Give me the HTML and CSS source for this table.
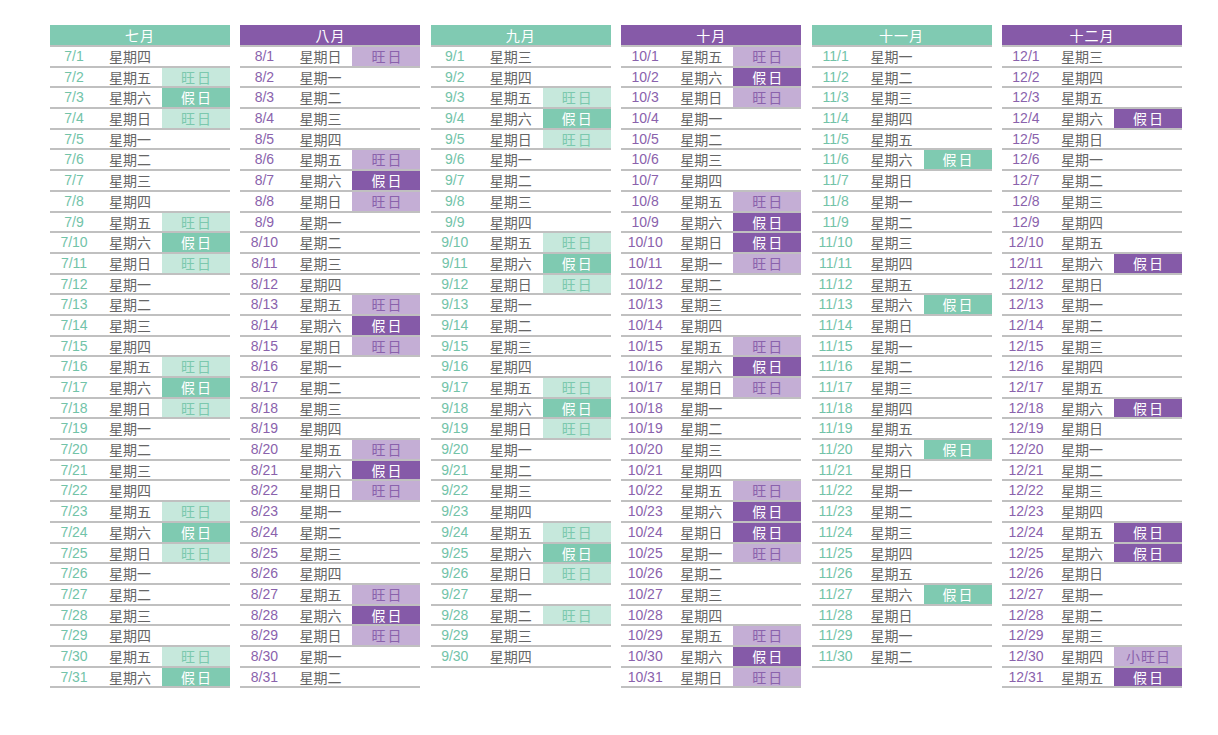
FILE: index.html
```html
<!DOCTYPE html>
<html lang="zh-Hant">
<head>
<meta charset="utf-8">
<title>2021 下半年行事曆</title>
<link rel="stylesheet" href="styles.css">
</head>
<body>
<div class="page">

<section class="month green">
<div class="hd">七月</div>
<div class="r"><span class="d">7/1</span><span class="w">星期四</span><span class="t"></span></div>
<div class="r"><span class="d">7/2</span><span class="w">星期五</span><span class="t lt">旺日</span></div>
<div class="r"><span class="d">7/3</span><span class="w">星期六</span><span class="t dk">假日</span></div>
<div class="r"><span class="d">7/4</span><span class="w">星期日</span><span class="t lt">旺日</span></div>
<div class="r"><span class="d">7/5</span><span class="w">星期一</span><span class="t"></span></div>
<div class="r"><span class="d">7/6</span><span class="w">星期二</span><span class="t"></span></div>
<div class="r"><span class="d">7/7</span><span class="w">星期三</span><span class="t"></span></div>
<div class="r"><span class="d">7/8</span><span class="w">星期四</span><span class="t"></span></div>
<div class="r"><span class="d">7/9</span><span class="w">星期五</span><span class="t lt">旺日</span></div>
<div class="r"><span class="d">7/10</span><span class="w">星期六</span><span class="t dk">假日</span></div>
<div class="r"><span class="d">7/11</span><span class="w">星期日</span><span class="t lt">旺日</span></div>
<div class="r"><span class="d">7/12</span><span class="w">星期一</span><span class="t"></span></div>
<div class="r"><span class="d">7/13</span><span class="w">星期二</span><span class="t"></span></div>
<div class="r"><span class="d">7/14</span><span class="w">星期三</span><span class="t"></span></div>
<div class="r"><span class="d">7/15</span><span class="w">星期四</span><span class="t"></span></div>
<div class="r"><span class="d">7/16</span><span class="w">星期五</span><span class="t lt">旺日</span></div>
<div class="r"><span class="d">7/17</span><span class="w">星期六</span><span class="t dk">假日</span></div>
<div class="r"><span class="d">7/18</span><span class="w">星期日</span><span class="t lt">旺日</span></div>
<div class="r"><span class="d">7/19</span><span class="w">星期一</span><span class="t"></span></div>
<div class="r"><span class="d">7/20</span><span class="w">星期二</span><span class="t"></span></div>
<div class="r"><span class="d">7/21</span><span class="w">星期三</span><span class="t"></span></div>
<div class="r"><span class="d">7/22</span><span class="w">星期四</span><span class="t"></span></div>
<div class="r"><span class="d">7/23</span><span class="w">星期五</span><span class="t lt">旺日</span></div>
<div class="r"><span class="d">7/24</span><span class="w">星期六</span><span class="t dk">假日</span></div>
<div class="r"><span class="d">7/25</span><span class="w">星期日</span><span class="t lt">旺日</span></div>
<div class="r"><span class="d">7/26</span><span class="w">星期一</span><span class="t"></span></div>
<div class="r"><span class="d">7/27</span><span class="w">星期二</span><span class="t"></span></div>
<div class="r"><span class="d">7/28</span><span class="w">星期三</span><span class="t"></span></div>
<div class="r"><span class="d">7/29</span><span class="w">星期四</span><span class="t"></span></div>
<div class="r"><span class="d">7/30</span><span class="w">星期五</span><span class="t lt">旺日</span></div>
<div class="r"><span class="d">7/31</span><span class="w">星期六</span><span class="t dk">假日</span></div>
</section>

<section class="month purple">
<div class="hd">八月</div>
<div class="r"><span class="d">8/1</span><span class="w">星期日</span><span class="t lt">旺日</span></div>
<div class="r"><span class="d">8/2</span><span class="w">星期一</span><span class="t"></span></div>
<div class="r"><span class="d">8/3</span><span class="w">星期二</span><span class="t"></span></div>
<div class="r"><span class="d">8/4</span><span class="w">星期三</span><span class="t"></span></div>
<div class="r"><span class="d">8/5</span><span class="w">星期四</span><span class="t"></span></div>
<div class="r"><span class="d">8/6</span><span class="w">星期五</span><span class="t lt">旺日</span></div>
<div class="r"><span class="d">8/7</span><span class="w">星期六</span><span class="t dk">假日</span></div>
<div class="r"><span class="d">8/8</span><span class="w">星期日</span><span class="t lt">旺日</span></div>
<div class="r"><span class="d">8/9</span><span class="w">星期一</span><span class="t"></span></div>
<div class="r"><span class="d">8/10</span><span class="w">星期二</span><span class="t"></span></div>
<div class="r"><span class="d">8/11</span><span class="w">星期三</span><span class="t"></span></div>
<div class="r"><span class="d">8/12</span><span class="w">星期四</span><span class="t"></span></div>
<div class="r"><span class="d">8/13</span><span class="w">星期五</span><span class="t lt">旺日</span></div>
<div class="r"><span class="d">8/14</span><span class="w">星期六</span><span class="t dk">假日</span></div>
<div class="r"><span class="d">8/15</span><span class="w">星期日</span><span class="t lt">旺日</span></div>
<div class="r"><span class="d">8/16</span><span class="w">星期一</span><span class="t"></span></div>
<div class="r"><span class="d">8/17</span><span class="w">星期二</span><span class="t"></span></div>
<div class="r"><span class="d">8/18</span><span class="w">星期三</span><span class="t"></span></div>
<div class="r"><span class="d">8/19</span><span class="w">星期四</span><span class="t"></span></div>
<div class="r"><span class="d">8/20</span><span class="w">星期五</span><span class="t lt">旺日</span></div>
<div class="r"><span class="d">8/21</span><span class="w">星期六</span><span class="t dk">假日</span></div>
<div class="r"><span class="d">8/22</span><span class="w">星期日</span><span class="t lt">旺日</span></div>
<div class="r"><span class="d">8/23</span><span class="w">星期一</span><span class="t"></span></div>
<div class="r"><span class="d">8/24</span><span class="w">星期二</span><span class="t"></span></div>
<div class="r"><span class="d">8/25</span><span class="w">星期三</span><span class="t"></span></div>
<div class="r"><span class="d">8/26</span><span class="w">星期四</span><span class="t"></span></div>
<div class="r"><span class="d">8/27</span><span class="w">星期五</span><span class="t lt">旺日</span></div>
<div class="r"><span class="d">8/28</span><span class="w">星期六</span><span class="t dk">假日</span></div>
<div class="r"><span class="d">8/29</span><span class="w">星期日</span><span class="t lt">旺日</span></div>
<div class="r"><span class="d">8/30</span><span class="w">星期一</span><span class="t"></span></div>
<div class="r"><span class="d">8/31</span><span class="w">星期二</span><span class="t"></span></div>
</section>

<section class="month green">
<div class="hd">九月</div>
<div class="r"><span class="d">9/1</span><span class="w">星期三</span><span class="t"></span></div>
<div class="r"><span class="d">9/2</span><span class="w">星期四</span><span class="t"></span></div>
<div class="r"><span class="d">9/3</span><span class="w">星期五</span><span class="t lt">旺日</span></div>
<div class="r"><span class="d">9/4</span><span class="w">星期六</span><span class="t dk">假日</span></div>
<div class="r"><span class="d">9/5</span><span class="w">星期日</span><span class="t lt">旺日</span></div>
<div class="r"><span class="d">9/6</span><span class="w">星期一</span><span class="t"></span></div>
<div class="r"><span class="d">9/7</span><span class="w">星期二</span><span class="t"></span></div>
<div class="r"><span class="d">9/8</span><span class="w">星期三</span><span class="t"></span></div>
<div class="r"><span class="d">9/9</span><span class="w">星期四</span><span class="t"></span></div>
<div class="r"><span class="d">9/10</span><span class="w">星期五</span><span class="t lt">旺日</span></div>
<div class="r"><span class="d">9/11</span><span class="w">星期六</span><span class="t dk">假日</span></div>
<div class="r"><span class="d">9/12</span><span class="w">星期日</span><span class="t lt">旺日</span></div>
<div class="r"><span class="d">9/13</span><span class="w">星期一</span><span class="t"></span></div>
<div class="r"><span class="d">9/14</span><span class="w">星期二</span><span class="t"></span></div>
<div class="r"><span class="d">9/15</span><span class="w">星期三</span><span class="t"></span></div>
<div class="r"><span class="d">9/16</span><span class="w">星期四</span><span class="t"></span></div>
<div class="r"><span class="d">9/17</span><span class="w">星期五</span><span class="t lt">旺日</span></div>
<div class="r"><span class="d">9/18</span><span class="w">星期六</span><span class="t dk">假日</span></div>
<div class="r"><span class="d">9/19</span><span class="w">星期日</span><span class="t lt">旺日</span></div>
<div class="r"><span class="d">9/20</span><span class="w">星期一</span><span class="t"></span></div>
<div class="r"><span class="d">9/21</span><span class="w">星期二</span><span class="t"></span></div>
<div class="r"><span class="d">9/22</span><span class="w">星期三</span><span class="t"></span></div>
<div class="r"><span class="d">9/23</span><span class="w">星期四</span><span class="t"></span></div>
<div class="r"><span class="d">9/24</span><span class="w">星期五</span><span class="t lt">旺日</span></div>
<div class="r"><span class="d">9/25</span><span class="w">星期六</span><span class="t dk">假日</span></div>
<div class="r"><span class="d">9/26</span><span class="w">星期日</span><span class="t lt">旺日</span></div>
<div class="r"><span class="d">9/27</span><span class="w">星期一</span><span class="t"></span></div>
<div class="r"><span class="d">9/28</span><span class="w">星期二</span><span class="t lt">旺日</span></div>
<div class="r"><span class="d">9/29</span><span class="w">星期三</span><span class="t"></span></div>
<div class="r"><span class="d">9/30</span><span class="w">星期四</span><span class="t"></span></div>
</section>

<section class="month purple">
<div class="hd">十月</div>
<div class="r"><span class="d">10/1</span><span class="w">星期五</span><span class="t lt">旺日</span></div>
<div class="r"><span class="d">10/2</span><span class="w">星期六</span><span class="t dk">假日</span></div>
<div class="r"><span class="d">10/3</span><span class="w">星期日</span><span class="t lt">旺日</span></div>
<div class="r"><span class="d">10/4</span><span class="w">星期一</span><span class="t"></span></div>
<div class="r"><span class="d">10/5</span><span class="w">星期二</span><span class="t"></span></div>
<div class="r"><span class="d">10/6</span><span class="w">星期三</span><span class="t"></span></div>
<div class="r"><span class="d">10/7</span><span class="w">星期四</span><span class="t"></span></div>
<div class="r"><span class="d">10/8</span><span class="w">星期五</span><span class="t lt">旺日</span></div>
<div class="r"><span class="d">10/9</span><span class="w">星期六</span><span class="t dk">假日</span></div>
<div class="r"><span class="d">10/10</span><span class="w">星期日</span><span class="t dk">假日</span></div>
<div class="r"><span class="d">10/11</span><span class="w">星期一</span><span class="t lt">旺日</span></div>
<div class="r"><span class="d">10/12</span><span class="w">星期二</span><span class="t"></span></div>
<div class="r"><span class="d">10/13</span><span class="w">星期三</span><span class="t"></span></div>
<div class="r"><span class="d">10/14</span><span class="w">星期四</span><span class="t"></span></div>
<div class="r"><span class="d">10/15</span><span class="w">星期五</span><span class="t lt">旺日</span></div>
<div class="r"><span class="d">10/16</span><span class="w">星期六</span><span class="t dk">假日</span></div>
<div class="r"><span class="d">10/17</span><span class="w">星期日</span><span class="t lt">旺日</span></div>
<div class="r"><span class="d">10/18</span><span class="w">星期一</span><span class="t"></span></div>
<div class="r"><span class="d">10/19</span><span class="w">星期二</span><span class="t"></span></div>
<div class="r"><span class="d">10/20</span><span class="w">星期三</span><span class="t"></span></div>
<div class="r"><span class="d">10/21</span><span class="w">星期四</span><span class="t"></span></div>
<div class="r"><span class="d">10/22</span><span class="w">星期五</span><span class="t lt">旺日</span></div>
<div class="r"><span class="d">10/23</span><span class="w">星期六</span><span class="t dk">假日</span></div>
<div class="r"><span class="d">10/24</span><span class="w">星期日</span><span class="t dk">假日</span></div>
<div class="r"><span class="d">10/25</span><span class="w">星期一</span><span class="t lt">旺日</span></div>
<div class="r"><span class="d">10/26</span><span class="w">星期二</span><span class="t"></span></div>
<div class="r"><span class="d">10/27</span><span class="w">星期三</span><span class="t"></span></div>
<div class="r"><span class="d">10/28</span><span class="w">星期四</span><span class="t"></span></div>
<div class="r"><span class="d">10/29</span><span class="w">星期五</span><span class="t lt">旺日</span></div>
<div class="r"><span class="d">10/30</span><span class="w">星期六</span><span class="t dk">假日</span></div>
<div class="r"><span class="d">10/31</span><span class="w">星期日</span><span class="t lt">旺日</span></div>
</section>

<section class="month green">
<div class="hd">十一月</div>
<div class="r"><span class="d">11/1</span><span class="w">星期一</span><span class="t"></span></div>
<div class="r"><span class="d">11/2</span><span class="w">星期二</span><span class="t"></span></div>
<div class="r"><span class="d">11/3</span><span class="w">星期三</span><span class="t"></span></div>
<div class="r"><span class="d">11/4</span><span class="w">星期四</span><span class="t"></span></div>
<div class="r"><span class="d">11/5</span><span class="w">星期五</span><span class="t"></span></div>
<div class="r"><span class="d">11/6</span><span class="w">星期六</span><span class="t dk">假日</span></div>
<div class="r"><span class="d">11/7</span><span class="w">星期日</span><span class="t"></span></div>
<div class="r"><span class="d">11/8</span><span class="w">星期一</span><span class="t"></span></div>
<div class="r"><span class="d">11/9</span><span class="w">星期二</span><span class="t"></span></div>
<div class="r"><span class="d">11/10</span><span class="w">星期三</span><span class="t"></span></div>
<div class="r"><span class="d">11/11</span><span class="w">星期四</span><span class="t"></span></div>
<div class="r"><span class="d">11/12</span><span class="w">星期五</span><span class="t"></span></div>
<div class="r"><span class="d">11/13</span><span class="w">星期六</span><span class="t dk">假日</span></div>
<div class="r"><span class="d">11/14</span><span class="w">星期日</span><span class="t"></span></div>
<div class="r"><span class="d">11/15</span><span class="w">星期一</span><span class="t"></span></div>
<div class="r"><span class="d">11/16</span><span class="w">星期二</span><span class="t"></span></div>
<div class="r"><span class="d">11/17</span><span class="w">星期三</span><span class="t"></span></div>
<div class="r"><span class="d">11/18</span><span class="w">星期四</span><span class="t"></span></div>
<div class="r"><span class="d">11/19</span><span class="w">星期五</span><span class="t"></span></div>
<div class="r"><span class="d">11/20</span><span class="w">星期六</span><span class="t dk">假日</span></div>
<div class="r"><span class="d">11/21</span><span class="w">星期日</span><span class="t"></span></div>
<div class="r"><span class="d">11/22</span><span class="w">星期一</span><span class="t"></span></div>
<div class="r"><span class="d">11/23</span><span class="w">星期二</span><span class="t"></span></div>
<div class="r"><span class="d">11/24</span><span class="w">星期三</span><span class="t"></span></div>
<div class="r"><span class="d">11/25</span><span class="w">星期四</span><span class="t"></span></div>
<div class="r"><span class="d">11/26</span><span class="w">星期五</span><span class="t"></span></div>
<div class="r"><span class="d">11/27</span><span class="w">星期六</span><span class="t dk">假日</span></div>
<div class="r"><span class="d">11/28</span><span class="w">星期日</span><span class="t"></span></div>
<div class="r"><span class="d">11/29</span><span class="w">星期一</span><span class="t"></span></div>
<div class="r"><span class="d">11/30</span><span class="w">星期二</span><span class="t"></span></div>
</section>

<section class="month purple">
<div class="hd">十二月</div>
<div class="r"><span class="d">12/1</span><span class="w">星期三</span><span class="t"></span></div>
<div class="r"><span class="d">12/2</span><span class="w">星期四</span><span class="t"></span></div>
<div class="r"><span class="d">12/3</span><span class="w">星期五</span><span class="t"></span></div>
<div class="r"><span class="d">12/4</span><span class="w">星期六</span><span class="t dk">假日</span></div>
<div class="r"><span class="d">12/5</span><span class="w">星期日</span><span class="t"></span></div>
<div class="r"><span class="d">12/6</span><span class="w">星期一</span><span class="t"></span></div>
<div class="r"><span class="d">12/7</span><span class="w">星期二</span><span class="t"></span></div>
<div class="r"><span class="d">12/8</span><span class="w">星期三</span><span class="t"></span></div>
<div class="r"><span class="d">12/9</span><span class="w">星期四</span><span class="t"></span></div>
<div class="r"><span class="d">12/10</span><span class="w">星期五</span><span class="t"></span></div>
<div class="r"><span class="d">12/11</span><span class="w">星期六</span><span class="t dk">假日</span></div>
<div class="r"><span class="d">12/12</span><span class="w">星期日</span><span class="t"></span></div>
<div class="r"><span class="d">12/13</span><span class="w">星期一</span><span class="t"></span></div>
<div class="r"><span class="d">12/14</span><span class="w">星期二</span><span class="t"></span></div>
<div class="r"><span class="d">12/15</span><span class="w">星期三</span><span class="t"></span></div>
<div class="r"><span class="d">12/16</span><span class="w">星期四</span><span class="t"></span></div>
<div class="r"><span class="d">12/17</span><span class="w">星期五</span><span class="t"></span></div>
<div class="r"><span class="d">12/18</span><span class="w">星期六</span><span class="t dk">假日</span></div>
<div class="r"><span class="d">12/19</span><span class="w">星期日</span><span class="t"></span></div>
<div class="r"><span class="d">12/20</span><span class="w">星期一</span><span class="t"></span></div>
<div class="r"><span class="d">12/21</span><span class="w">星期二</span><span class="t"></span></div>
<div class="r"><span class="d">12/22</span><span class="w">星期三</span><span class="t"></span></div>
<div class="r"><span class="d">12/23</span><span class="w">星期四</span><span class="t"></span></div>
<div class="r"><span class="d">12/24</span><span class="w">星期五</span><span class="t dk">假日</span></div>
<div class="r"><span class="d">12/25</span><span class="w">星期六</span><span class="t dk">假日</span></div>
<div class="r"><span class="d">12/26</span><span class="w">星期日</span><span class="t"></span></div>
<div class="r"><span class="d">12/27</span><span class="w">星期一</span><span class="t"></span></div>
<div class="r"><span class="d">12/28</span><span class="w">星期二</span><span class="t"></span></div>
<div class="r"><span class="d">12/29</span><span class="w">星期三</span><span class="t"></span></div>
<div class="r"><span class="d">12/30</span><span class="w">星期四</span><span class="t lt small">小旺日</span></div>
<div class="r"><span class="d">12/31</span><span class="w">星期五</span><span class="t dk">假日</span></div>
</section>

</div>
</body>
</html>
```

FILE: styles.css
```css
html, body {
  margin: 0;
  padding: 0;
  background: #ffffff;
}

body {
  font-family: "Liberation Sans", "Noto Sans CJK TC", sans-serif;
  font-size: 14px;
}

.page {
  display: grid;
  grid-template-columns: repeat(6, 180px);
  column-gap: 10.4px;
  align-items: start;
  padding: 25px 0 0 50px;
}

.month .hd {
  height: 20px;
  line-height: 20px;
  text-align: center;
  color: #ffffff;
  font-family: "Noto Sans CJK TC", sans-serif;
  font-size: 14px;
  letter-spacing: 1px;
  border-bottom: 2px solid #c0c0c0;
}

.r {
  display: grid;
  grid-template-columns: 48px 64px 68px;
  height: 18.7px;
  border-bottom: 2px solid #c0c0c0;
  line-height: 18.7px;
}

.r span {
  display: block;
  text-align: center;
  white-space: nowrap;
}

.d {
  font-family: "Liberation Sans", sans-serif;
}

.w {
  color: #666666;
  font-family: "Noto Sans CJK TC", sans-serif;
}

.t {
  font-family: "Noto Sans CJK TC", sans-serif;
  letter-spacing: 2px;
  text-indent: 2px;
}

.t.small {
  letter-spacing: 1px;
  text-indent: 1px;
}

/* green months */
.green .hd { background: #80cab2; }
.green .d { color: #72c3a8; }
.green .t.lt { background: #c6e8dc; color: #7cc8ae; }
.green .t.dk { background: #7fcab1; color: #ffffff; }

/* purple months */
.purple .hd { background: #865aa8; }
.purple .d { color: #8a62ac; }
.purple .t.lt { background: #c4aed5; color: #8a62ac; }
.purple .t.dk { background: #855aa8; color: #ffffff; }
```
